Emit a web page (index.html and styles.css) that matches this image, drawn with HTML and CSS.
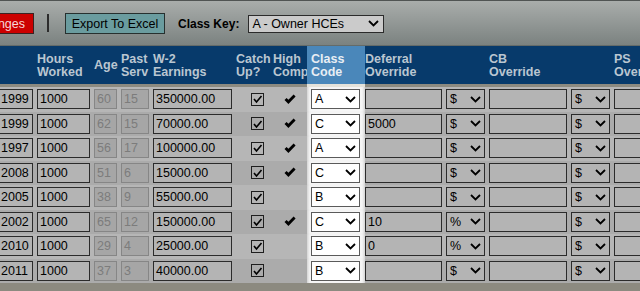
FILE: index.html
```html
<!DOCTYPE html>
<html>
<head>
    <title>Class Allocation</title>
    <link rel="stylesheet" href="styles.css">
</head>
<body>
    <div class="toolbar">
        <button class="btn btn-save">Save Changes</button>
        <span class="divider"></span>
        <button class="btn btn-export">Export To Excel</button>
        <span class="key-label">Class Key:</span>
        <div class="select key-select">
            <span>A - Owner HCEs</span>
            <svg width="11" height="7" viewBox="0 0 11 7"><polyline points="1,1 5.5,5.5 10,1" fill="none" stroke="#000" stroke-width="1.8"/></svg>
        </div>
    </div>

    <div class="table" id="table">
        <div class="row head">
            <div class="cell"></div>
            <div class="cell">Hours<br>Worked</div>
            <div class="cell single">Age</div>
            <div class="cell">Past<br>Serv</div>
            <div class="cell">W-2<br>Earnings</div>
            <div class="cell">Catch<br>Up?</div>
            <div class="cell">High<br>Comp</div>
            <div class="cell class-col">Class<br>Code</div>
            <div class="cell">Deferral<br>Override</div>
            <div class="cell"></div>
            <div class="cell">CB<br>Override</div>
            <div class="cell"></div>
            <div class="cell">PS<br>Override</div>
        </div>
        <div class="row strip">
            <div></div><div></div><div></div><div></div><div></div><div></div><div></div>
            <div class="class-col"></div>
        </div>
    </div>

    <script>
        // participant rows: year, hours, age, serv, w2, hce, class, deferral, deferral type
        const people = [
            ['1999', '1000', 60, 15, '350000.00', true, 'A', '', '$'],
            ['1999', '1000', 62, 15, '70000.00', true, 'C', '5000', '$'],
            ['1997', '1000', 56, 17, '100000.00', true, 'A', '', '$'],
            ['2008', '1000', 51, 6, '15000.00', true, 'C', '', '$'],
            ['2005', '1000', 38, 9, '55000.00', false, 'B', '', '$'],
            ['2002', '1000', 65, 12, '150000.00', true, 'C', '10', '%'],
            ['2010', '1000', 29, 4, '25000.00', false, 'B', '0', '%'],
            ['2011', '1000', 37, 3, '40000.00', false, 'B', '', '$']
        ];

        const chevron = '<svg width="11" height="7" viewBox="0 0 11 7"><polyline points="1,1 5.5,5.5 10,1" fill="none" stroke="#000" stroke-width="1.8"/></svg>';
        const tick = '<svg width="11" height="10" viewBox="0 0 11 10"><polyline points="2,5 4.5,8 9.5,2" fill="none" stroke="#000" stroke-width="1.6"/></svg>';
        const heavyTick = '<svg width="12" height="11" viewBox="0 0 12 11"><path d="M0.5 6 L2.6 3.9 L4.4 5.8 L9.6 0.4 L11.6 2.4 L4.4 10 Z" fill="#000"/></svg>';

        const table = document.getElementById('table');

        people.forEach((p, i) => {
            const row = document.createElement('div');
            row.className = 'row body ' + (i % 2 ? 'even' : 'odd');
            row.innerHTML = `
                <div class="cell"><div class="field year">${p[0]}</div></div>
                <div class="cell"><div class="field">${p[1]}</div></div>
                <div class="cell"><div class="field disabled">${p[2]}</div></div>
                <div class="cell"><div class="field disabled">${p[3]}</div></div>
                <div class="cell"><div class="field">${p[4]}</div></div>
                <div class="cell catch"><span class="checkbox">${tick}</span></div>
                <div class="cell hce">${p[5] ? heavyTick : ''}</div>
                <div class="cell class-col"><div class="select class-select"><span>${p[6]}</span>${chevron}</div></div>
                <div class="cell"><div class="field">${p[7]}</div></div>
                <div class="cell"><div class="select type-select"><span>${p[8]}</span>${chevron}</div></div>
                <div class="cell"><div class="field"></div></div>
                <div class="cell"><div class="select type-select"><span>$</span>${chevron}</div></div>
                <div class="cell"><div class="field"></div></div>`;
            table.appendChild(row);
        });
    </script>
</body>
</html>
```
FILE: styles.css
```css
html, body {
    margin: 0;
    overflow: hidden;
}

body {
    font-family: "Liberation Sans", Arial, sans-serif;
    font-size: 12px;
    background-color: #8c8a80;
    height: 291px;
}

/* toolbar */

.toolbar {
    display: flex;
    align-items: center;
    height: 44px;
    border-top: 1px solid #505453;
    border-bottom: 1px solid #646b69;
    background: linear-gradient(#a9adab, #7b8280);
}

.btn {
    height: 21px;
    padding: 0 7px;
    font-family: inherit;
    font-size: 12.5px;
    border: 1px solid #222;
    margin-top: 1px;
}

.btn-save {
    margin-left: -65px;
    padding-right: 8px;
    background-color: #cc0000;
    color: #f6d8d8;
    border-color: #3b2222;
}

.divider {
    width: 2px;
    height: 18px;
    margin: 0 16px 0 13px;
    background-color: #2c2c2c;
}

.btn-export {
    width: 100px;
    padding: 0;
    background-color: #6a9c9f;
    color: #000;
    border-color: #26302f;
}

.key-label {
    font-weight: bold;
    margin: 1px 9px 0 13px;
}

.select {
    display: flex;
    align-items: center;
    justify-content: space-between;
    box-sizing: border-box;
    border: 1px solid #2b2b2b;
    height: 20px;
    padding: 0 3px 0 3px;
}

.key-select {
    width: 136px;
    height: 18px;
    margin-top: 1px;
    font-size: 12.5px;
    background-color: #cbcbcb;
    padding-right: 4px;
}

/* grid */

.table {
    margin-left: -3px;
}

.row {
    display: grid;
    grid-template-columns: 40px 57px 27px 32px 83px 37px 34px 58px 81px 43px 82px 43px 100px;
}

.head {
    height: 38px;
    background-color: #073a6b;
    color: #bac6d1;
    font-weight: bold;
    font-size: 12.5px;
    line-height: 13px;
}

.head .cell {
    padding-top: 7px;
}

.head .single {
    padding-top: 13px;
}

.head .class-col {
    padding-left: 4px;
    background-color: #4a87ba;
    color: #e8eef4;
}

.strip {
    height: 3px;
}

.strip .class-col {
    background-color: #e4e2da;
}

.body {
    height: 24.5px;
    align-items: center;
    font-size: 12.5px;
}

.odd {
    background-color: #b6b6b6;
}

.even {
    background-color: #ababab;
}

.body .cell {
    height: 100%;
    display: flex;
    align-items: center;
}

.field {
    box-sizing: border-box;
    width: calc(100% - 4px);
    height: 20px;
    line-height: 18px;
    padding-left: 2px;
    border: 1px solid #2b2b2b;
    background-color: #b4b4b4;
    color: #000;
    overflow: hidden;
    white-space: nowrap;
}

.field.year {
    padding-left: 3px;
}

.field.disabled {
    border-color: #868686;
    background-color: #a6a6a6;
    color: #7c7c7c;
}

.catch {
    padding-left: 15px;
}

.checkbox {
    box-sizing: border-box;
    width: 13px;
    height: 13px;
    border: 1px solid #1e1e1e;
    display: flex;
    align-items: center;
    justify-content: center;
}

.hce {
    padding-left: 11px;
}

.body .class-col {
    padding-left: 4px;
    background-color: #f6f6f6;
    box-shadow: inset 3px 0 3px -2px rgba(0, 0, 0, 0.18), inset -3px 0 3px -2px rgba(0, 0, 0, 0.18);
}

.class-select {
    width: 49px;
    background-color: #fff;
    border-color: #5a5a5a;
}

.type-select {
    width: 39px;
    background-color: #b4b4b4;
}
```
